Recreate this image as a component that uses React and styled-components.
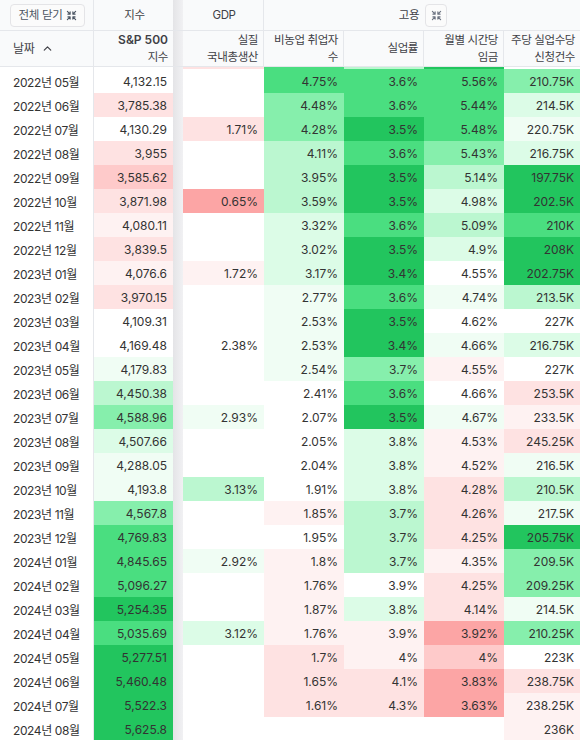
import React, { useLayoutEffect, useRef } from "react";
import styled, { createGlobalStyle } from "styled-components";
import { Shrink, ChevronUp } from "lucide-react";

const GlobalStyle = createGlobalStyle`
  body {
    margin: 0;
    background: #fff;
    font-family: "Inter", "Noto Sans CJK KR", sans-serif;
    color: #333;
  }
`;

const palette = {
  W: "#ffffff",
  G0: "#f0fdf4",
  G1: "#dcfce7",
  G2: "#bbf7d0",
  G3: "#86efac",
  G4: "#4ade80",
  G5: "#22c55e",
  R0: "#fef2f2",
  R1: "#fee2e2",
  R2: "#fecaca",
  R3: "#fca5a5",
};

const COLUMNS = "94px 79px 10px 81px 80px 80px 80px 76px";

// 날짜, S&P, GDP, 비농업, 실업률, 시간당 임금, 실업수당 (값, 색)
const rows = [
  ["2022년 04월", "4,131.93", "W", "", "R1", "4.9%", "G4", "3.6%", "G2", "5.5%", "G5", "219K", "W"],
  ["2022년 05월", "4,132.15", "W", "", "W", "4.75%", "G4", "3.6%", "G4", "5.56%", "G4", "210.75K", "G3"],
  ["2022년 06월", "3,785.38", "R1", "", "W", "4.48%", "G3", "3.6%", "G4", "5.44%", "G4", "214.5K", "G1"],
  ["2022년 07월", "4,130.29", "W", "1.71%", "R1", "4.28%", "G3", "3.5%", "G5", "5.48%", "G4", "220.75K", "G0"],
  ["2022년 08월", "3,955", "R1", "", "W", "4.11%", "G2", "3.6%", "G4", "5.43%", "G3", "216.75K", "G1"],
  ["2022년 09월", "3,585.62", "R2", "", "W", "3.95%", "G2", "3.5%", "G5", "5.14%", "G2", "197.75K", "G5"],
  ["2022년 10월", "3,871.98", "R1", "0.65%", "R3", "3.59%", "G2", "3.5%", "G5", "4.98%", "G1", "202.5K", "G5"],
  ["2022년 11월", "4,080.11", "R0", "", "W", "3.32%", "G1", "3.6%", "G4", "5.09%", "G2", "210K", "G4"],
  ["2022년 12월", "3,839.5", "R1", "", "W", "3.02%", "G1", "3.5%", "G5", "4.9%", "G1", "208K", "G5"],
  ["2023년 01월", "4,076.6", "R0", "1.72%", "R0", "3.17%", "G1", "3.4%", "G5", "4.55%", "W", "202.75K", "G5"],
  ["2023년 02월", "3,970.15", "R1", "", "W", "2.77%", "G0", "3.6%", "G4", "4.74%", "G0", "213.5K", "G2"],
  ["2023년 03월", "4,109.31", "W", "", "W", "2.53%", "G0", "3.5%", "G5", "4.62%", "W", "227K", "W"],
  ["2023년 04월", "4,169.48", "W", "2.38%", "W", "2.53%", "G0", "3.4%", "G5", "4.66%", "G0", "216.75K", "G1"],
  ["2023년 05월", "4,179.83", "G0", "", "W", "2.54%", "G0", "3.7%", "G3", "4.55%", "R0", "227K", "W"],
  ["2023년 06월", "4,450.38", "G2", "", "W", "2.41%", "W", "3.6%", "G4", "4.66%", "W", "253.5K", "R1"],
  ["2023년 07월", "4,588.96", "G3", "2.93%", "G0", "2.07%", "W", "3.5%", "G5", "4.67%", "G0", "233.5K", "R0"],
  ["2023년 08월", "4,507.66", "G1", "", "W", "2.05%", "W", "3.8%", "G1", "4.53%", "R0", "245.25K", "R1"],
  ["2023년 09월", "4,288.05", "G0", "", "W", "2.04%", "W", "3.8%", "G1", "4.52%", "R0", "216.5K", "G0"],
  ["2023년 10월", "4,193.8", "G0", "3.13%", "G2", "1.91%", "W", "3.8%", "G1", "4.28%", "R1", "210.5K", "G2"],
  ["2023년 11월", "4,567.8", "G3", "", "W", "1.85%", "R0", "3.7%", "G2", "4.26%", "R1", "217.5K", "G0"],
  ["2023년 12월", "4,769.83", "G4", "", "W", "1.95%", "W", "3.7%", "G2", "4.25%", "R1", "205.75K", "G5"],
  ["2024년 01월", "4,845.65", "G4", "2.92%", "G0", "1.8%", "R0", "3.7%", "G2", "4.35%", "R0", "209.5K", "G3"],
  ["2024년 02월", "5,096.27", "G4", "", "W", "1.76%", "R0", "3.9%", "W", "4.25%", "R1", "209.25K", "G3"],
  ["2024년 03월", "5,254.35", "G5", "", "W", "1.87%", "R0", "3.8%", "G1", "4.14%", "R1", "214.5K", "G0"],
  ["2024년 04월", "5,035.69", "G4", "3.12%", "G1", "1.76%", "R0", "3.9%", "R0", "3.92%", "R3", "210.25K", "G3"],
  ["2024년 05월", "5,277.51", "G5", "", "W", "1.7%", "R1", "4%", "R0", "4%", "R2", "223K", "W"],
  ["2024년 06월", "5,460.48", "G5", "", "W", "1.65%", "R1", "4.1%", "R1", "3.83%", "R3", "238.75K", "R1"],
  ["2024년 07월", "5,522.3", "G5", "", "W", "1.61%", "R1", "4.3%", "R1", "3.63%", "R3", "238.25K", "R0"],
  ["2024년 08월", "5,625.8", "G5", "", "W", "", "W", "", "W", "", "W", "236K", "R0"],
];

const Scroller = styled.div`
  height: 740px;
  width: 580px;
  overflow: hidden;
  font-size: 12px;
`;

const Head = styled.div`
  position: sticky;
  top: 0;
  z-index: 1;
  background: #f9fafb;
`;

const Row = styled.div`
  display: grid;
  grid-template-columns: ${COLUMNS};
  height: ${(p) => p.$height}px;
  border-bottom: ${(p) => (p.$line ? "1px solid #e5e7eb" : "none")};
`;

const HeadCell = styled.div`
  display: flex;
  align-items: center;
  justify-content: ${(p) => p.$justify || "flex-end"};
  gap: 6px;
  padding: 0 5px 0 7px;
  min-width: 0;
  white-space: nowrap;
  text-align: ${(p) => (p.$justify === "center" ? "center" : "right")};
  font-size: 11.5px;
  letter-spacing: -0.4px;
  line-height: 17px;
  color: #3f3f46;
  border-right: ${(p) => (p.$edge ? "1px solid #e5e7eb" : "none")};
  grid-column: ${(p) => (p.$span ? `span ${p.$span}` : "auto")};
`;

const SortLabel = styled.span`
  display: inline-flex;
  align-items: center;
  gap: 7px;
  padding-left: 6px;
  font-size: 12px;
`;

const Strong = styled.span`
  font-weight: 600;
  font-size: 12px;
  letter-spacing: 0;
`;

const Gutter = styled.div`
  background: linear-gradient(to right, #e4e4e7, #f1f1f3);
`;

const ToggleButton = styled.button`
  display: inline-flex;
  align-items: center;
  gap: 3px;
  height: 23px;
  padding: 0 7px;
  border: 1px solid #e4e4e7;
  border-radius: 4px;
  background: #fbfbfb;
  font: inherit;
  font-size: 11.5px;
  letter-spacing: -0.3px;
  color: #4b5563;
`;

const IconButton = styled.button`
  display: inline-flex;
  align-items: center;
  justify-content: center;
  width: 22px;
  height: 23px;
  padding: 0;
  border: 1px solid #e4e4e7;
  border-radius: 4px;
  background: #fbfbfb;
  color: #6b7280;
`;

const DateCell = styled.div`
  display: flex;
  align-items: center;
  padding-left: 13px;
  letter-spacing: -0.4px;
  border-right: 1px solid #e5e7eb;
  background: #fff;
`;

const Cell = styled.div`
  display: flex;
  align-items: center;
  justify-content: flex-end;
  padding-right: 6px;
  background: ${(p) => palette[p.$tone] || "#fff"};
`;

const EconomyTable = () => {
  const ref = useRef(null);

  // 스크롤된 상태 재현 (첫 행 일부가 헤더 아래로 가려짐)
  useLayoutEffect(() => {
    if (ref.current) ref.current.scrollTop = 22;
  }, []);

  return (
    <Scroller ref={ref}>
      <Head>
        <Row $height={30} $line>
          <HeadCell $justify="center" $edge>
            <ToggleButton>
              전체 닫기 <Shrink size={11} strokeWidth={2.5} />
            </ToggleButton>
          </HeadCell>
          <HeadCell $justify="center">지수</HeadCell>
          <Gutter />
          <HeadCell $justify="center" $edge>
            GDP
          </HeadCell>
          <HeadCell $justify="center" $span={4}>
            <span>고용</span>
            <IconButton>
              <Shrink size={11} strokeWidth={2.5} />
            </IconButton>
          </HeadCell>
        </Row>
        <Row $height={35} $line>
          <HeadCell $justify="flex-start" $edge>
            <SortLabel>
              날짜 <ChevronUp size={13} strokeWidth={2.2} />
            </SortLabel>
          </HeadCell>
          <HeadCell>
            <span>
              <Strong>S&amp;P 500</Strong>
              <br />
              지수
            </span>
          </HeadCell>
          <Gutter />
          <HeadCell $edge>
            <span>
              실질
              <br />
              국내총생산
            </span>
          </HeadCell>
          <HeadCell $edge>
            <span>
              비농업 취업자
              <br />수
            </span>
          </HeadCell>
          <HeadCell $edge>실업률</HeadCell>
          <HeadCell $edge>
            <span>
              월별 시간당
              <br />
              임금
            </span>
          </HeadCell>
          <HeadCell>
            <span>
              주당 실업수당
              <br />
              신청건수
            </span>
          </HeadCell>
        </Row>
      </Head>

      {rows.map((r) => (
        <Row key={r[0]} $height={24}>
          <DateCell>{r[0]}</DateCell>
          <Cell $tone={r[2]}>{r[1]}</Cell>
          <Gutter />
          <Cell $tone={r[4]}>{r[3]}</Cell>
          <Cell $tone={r[6]}>{r[5]}</Cell>
          <Cell $tone={r[8]}>{r[7]}</Cell>
          <Cell $tone={r[10]}>{r[9]}</Cell>
          <Cell $tone={r[12]}>{r[11]}</Cell>
        </Row>
      ))}
    </Scroller>
  );
};

export default function App() {
  return (
    <>
      <GlobalStyle />
      <EconomyTable />
    </>
  );
}
